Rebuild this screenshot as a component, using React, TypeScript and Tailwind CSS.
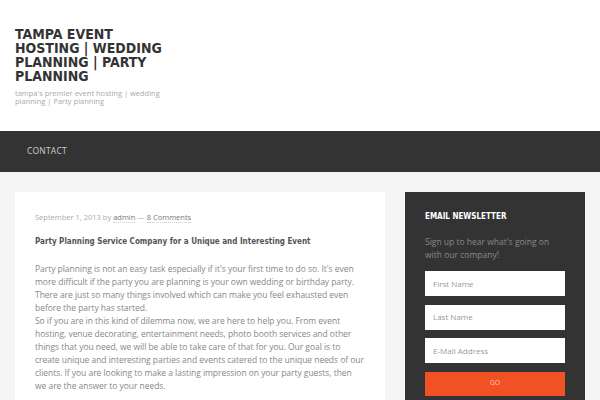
import React from "react";

export default function App() {
  const body = "'Open Sans', 'Liberation Sans', sans-serif";
  const dv = "'DejaVu Sans Condensed', 'DejaVu Sans', sans-serif";
  return (
    <div className="w-[600px] h-[400px] overflow-hidden bg-[#f5f5f5]" style={{ fontFamily: body }}>
      <header className="bg-white h-[131px] px-[15px] pt-[27px]">
        <h1 className="text-[14px] leading-[14px] font-bold text-[#333] w-[160px]" style={{ fontFamily: dv }}>
          TAMPA EVENT HOSTING | WEDDING PLANNING | PARTY PLANNING
        </h1>
        <p className="text-[7.5px] leading-[8px] text-[#aaa] w-[150px] mt-[6px]">
          tampa's premier event hosting | wedding planning | Party planning
        </p>
      </header>
      <nav className="bg-[#333] h-[41px] flex items-center px-[27px]">
        <span className="text-[8.5px] text-[#ccc] tracking-[0.2px]">CONTACT</span>
      </nav>
      <div className="flex gap-[20px] px-[15px] pt-[20px]">
        <main className="bg-white w-[370px] h-[230px] px-[20px] pt-[20px]">
          <div className="text-[7.5px] leading-[10px] text-[#aaa]">
            September 1, 2013 <span>by</span>{" "}
            <span className="text-[#777] border-b border-dotted border-[#ccc]">admin</span>{" "}
            <span>—</span>{" "}
            <span className="text-[#777] border-b border-dotted border-[#ccc]">8 Comments</span>
          </div>
          <h2 className="mt-[15px] text-[8px] leading-[10px] font-bold text-[#555]" style={{ fontFamily: dv }}>
            Party Planning Service Company for a Unique and Interesting Event
          </h2>
          <p className="mt-[15px] text-[8.5px] leading-[13px] tracking-[-0.04px] text-[#888]">
            Party planning is not an easy task especially if it's your first time to do so. It's even more difficult if the party you are planning is your own wedding or birthday party. There are just so many things involved which can make you feel exhausted even before the party has started.
            <br />
            So if you are in this kind of dilemma now, we are here to help you. From event hosting, venue decorating, entertainment needs, photo booth services and other things that you need, we will be able to take care of that for you. Our goal is to create unique and interesting parties and events catered to the unique needs of our clients. If you are looking to make a lasting impression on your party guests, then we are the answer to your needs.
          </p>
        </main>
        <aside className="bg-[#333] w-[180px] h-[230px] px-[20px] pt-[20px]">
          <h3 className="text-[8px] leading-[10px] font-bold text-white" style={{ fontFamily: dv }}>
            EMAIL NEWSLETTER
          </h3>
          <p className="mt-[13px] text-[8.5px] leading-[13px] text-[#888]">
            Sign up to hear what's going on with our company!
          </p>
          <div className="mt-[10px] flex flex-col gap-[8.5px]">
            <div className="bg-white h-[25px] flex items-center px-[8px] text-[8px] text-[#999]">First Name</div>
            <div className="bg-white h-[25px] flex items-center px-[8px] text-[8px] text-[#999]">Last Name</div>
            <div className="bg-white h-[25px] flex items-center px-[8px] text-[8px] text-[#999]">E-Mail Address</div>
            <div className="bg-[#f15123] h-[24px] flex items-center justify-center text-[7px] text-[#fcc9b5]">GO</div>
          </div>
        </aside>
      </div>
    </div>
  );
}
